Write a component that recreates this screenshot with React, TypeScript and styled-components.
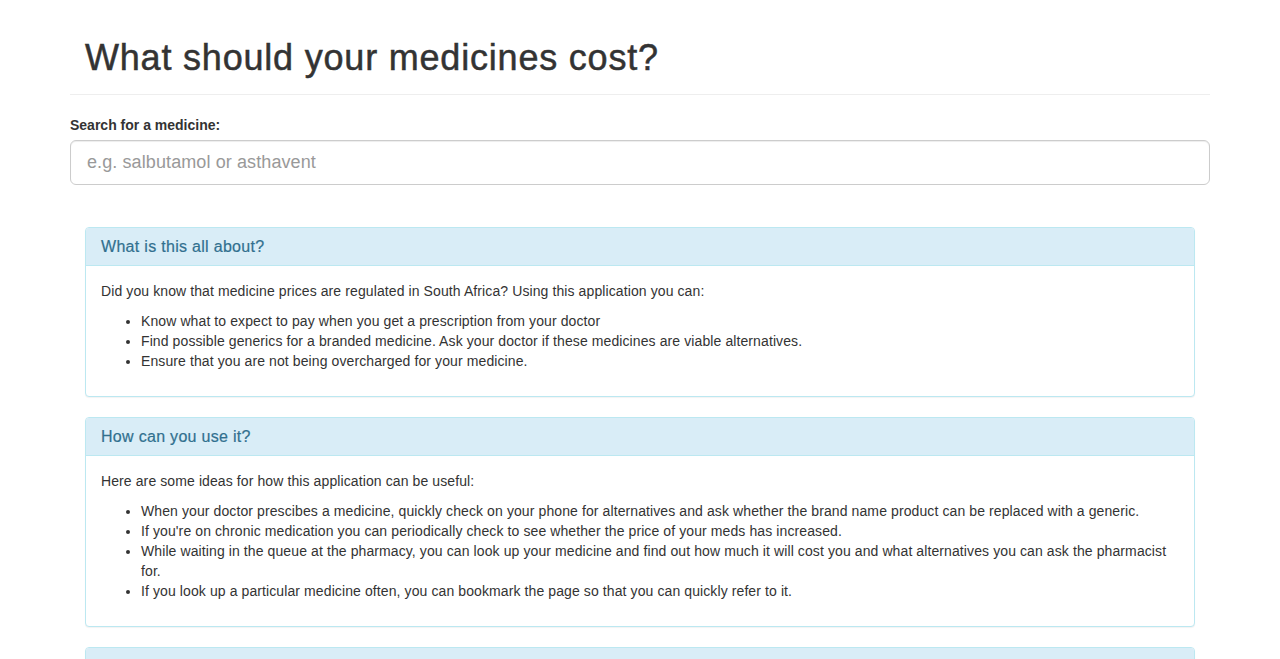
import React from "react";
import styled, { createGlobalStyle } from "styled-components";

const Global = createGlobalStyle`
  html, body { margin: 0; padding: 0; background: #fff; }
  body {
    font-family: "Helvetica Neue", "Liberation Sans", Arial, sans-serif;
    font-size: 14px;
    line-height: 1.42857143;
    letter-spacing: 0.1px;
    color: #333;
  }
  * { box-sizing: border-box; }
`;

const Container = styled.div`
  width: 1170px;
  margin: 0 auto;
  padding: 0 15px;
`;

const PageHeader = styled.div`
  padding: 38px 0 9px;
  margin: 0 0 20px;
  border-bottom: 1px solid #eee;
`;

const Title = styled.h1`
  margin: 0 0 7px;
  padding: 0 15px;
  font-size: 36px;
  font-weight: 500;
  line-height: 40px;
  letter-spacing: 0.8px;
  color: #333;
  -webkit-text-stroke: 0.5px #333;
`;

const FormGroup = styled.div`
  margin-bottom: 15px;
`;

const Label = styled.label`
  display: inline-block;
  margin-bottom: 5px;
  font-weight: 700;
  letter-spacing: 0;
`;

const SearchInput = styled.input`
  display: block;
  width: 100%;
  height: 45px;
  padding: 10px 16px;
  font-size: 18px;
  line-height: 1.3333333;
  font-family: inherit;
  letter-spacing: 0.1px;
  color: #555;
  background: #fff;
  border: 1px solid #ccc;
  border-radius: 6px;
  box-shadow: inset 0 1px 1px rgba(0, 0, 0, 0.075);
  outline: none;
  &::placeholder { color: #999; }
`;

const Panels = styled.div`
  padding: 27px 15px 0;
`;

const Panel = styled.section`
  margin-bottom: 20px;
  background: #fff;
  border: 1px solid #bce8f1;
  border-radius: 4px;
  box-shadow: 0 1px 1px rgba(0, 0, 0, 0.05);
`;

const PanelHeading = styled.div`
  padding: 10px 15px;
  background: #d9edf7;
  color: #31708f;
  border-bottom: 1px solid #bce8f1;
  border-top-left-radius: 3px;
  border-top-right-radius: 3px;
`;

const PanelTitle = styled.h3`
  margin: 0;
  font-size: 16px;
  font-weight: 500;
  line-height: 17px;
  letter-spacing: 0.3px;
  color: inherit;
  -webkit-text-stroke: 0.2px #31708f;
`;

const PanelBody = styled.div`
  padding: 15px;
`;

const Para = styled.p`
  margin: 0 0 10px;
`;

const List = styled.ul`
  margin: 0 0 10px;
  padding-left: 40px;
`;

const sections = [
  {
    title: "What is this all about?",
    intro:
      "Did you know that medicine prices are regulated in South Africa? Using this application you can:",
    items: [
      "Know what to expect to pay when you get a prescription from your doctor",
      "Find possible generics for a branded medicine. Ask your doctor if these medicines are viable alternatives.",
      "Ensure that you are not being overcharged for your medicine.",
    ],
  },
  {
    title: "How can you use it?",
    intro: "Here are some ideas for how this application can be useful:",
    items: [
      "When your doctor prescibes a medicine, quickly check on your phone for alternatives and ask whether the brand name product can be replaced with a generic.",
      "If you're on chronic medication you can periodically check to see whether the price of your meds has increased.",
      "While waiting in the queue at the pharmacy, you can look up your medicine and find out how much it will cost you and what alternatives you can ask the pharmacist for.",
      "If you look up a particular medicine often, you can bookmark the page so that you can quickly refer to it.",
    ],
  },
  {
    title: "Where does the data come from?",
    intro:
      "The medicine prices are published by the Department of Health in the Single Exit Price database.",
    items: [],
  },
];

export default function App() {
  return (
    <>
      <Global />
      <Container>
        <PageHeader>
          <Title>What should your medicines cost?</Title>
        </PageHeader>
        <FormGroup>
          <Label htmlFor="search">Search for a medicine:</Label>
          <SearchInput id="search" type="text" placeholder="e.g. salbutamol or asthavent" />
        </FormGroup>
        <Panels>
          {sections.map((s) => (
            <Panel key={s.title}>
              <PanelHeading>
                <PanelTitle>{s.title}</PanelTitle>
              </PanelHeading>
              <PanelBody>
                <Para>{s.intro}</Para>
                {s.items.length > 0 && (
                  <List>
                    {s.items.map((it) => (
                      <li key={it}>{it}</li>
                    ))}
                  </List>
                )}
              </PanelBody>
            </Panel>
          ))}
        </Panels>
      </Container>
    </>
  );
}
